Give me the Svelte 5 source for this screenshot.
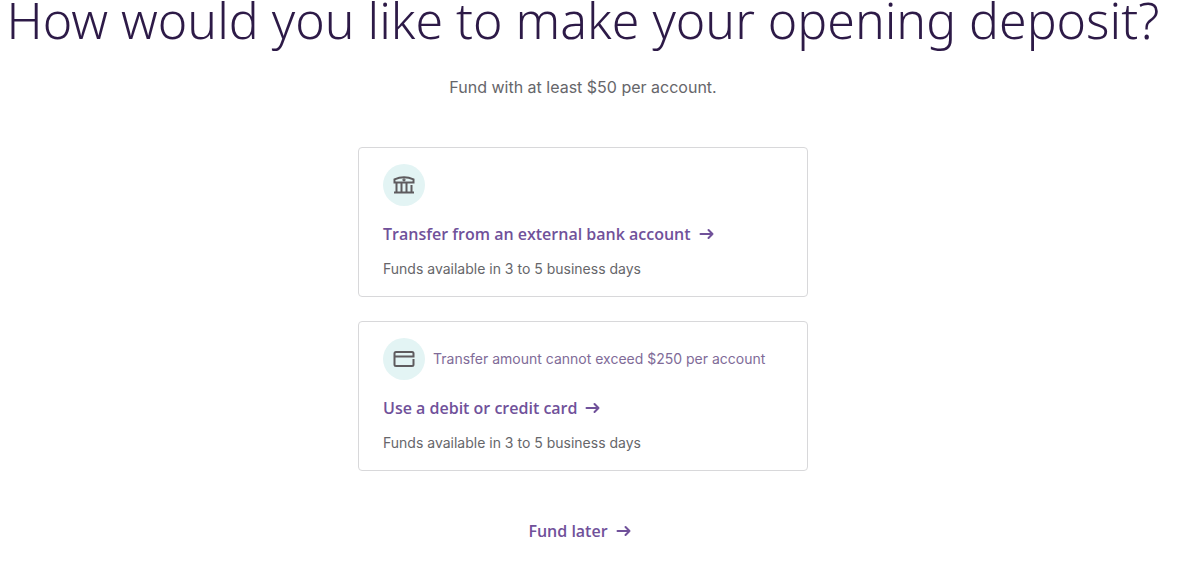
<script>
    const options = [
        {
            id: 'bank',
            title: 'Transfer from an external bank account',
            detail: 'Funds available in 3 to 5 business days',
            note: ''
        },
        {
            id: 'card',
            title: 'Use a debit or credit card',
            detail: 'Funds available in 3 to 5 business days',
            note: 'Transfer amount cannot exceed $250 per account'
        }
    ];
</script>

{#snippet arrow()}
    <svg class="arrow" viewBox="0 0 16 12" aria-hidden="true">
        <path d="M1.500 6h12M9.500 2L13.500 6l-4 4" />
    </svg>
{/snippet}

<main class="funding">
    <h1 class="funding__title">How would you like to make your opening deposit?</h1>
    <p class="funding__intro">Fund with at least $50 per account.</p>

    <div class="funding__options">
        {#each options as option (option.id)}
            <section class="option">
                <div class="option__top">
                    <span class="option__icon">
                        {#if option.id === 'bank'}
                            <svg viewBox="0 0 24 24" aria-hidden="true">
                                <path d="M2.500 9.500V6.300Q12 2 21.500 6.300V9.500Z" />
                                <path d="M4.500 10v9M9.500 10v9M14.500 10v9M19.500 12v7M2 19.500h20" />
                                <circle cx="12" cy="6.800" r="0.600" />
                            </svg>
                        {:else}
                            <svg viewBox="0 0 24 24" aria-hidden="true">
                                <path d="M21.500 12v5.500q0 1.500-1.500 1.500H4q-1.500 0-1.500-1.500V6.500Q2.500 5 4 5h16q1.500 0 1.500 1.500V9.500H2.500" />
                            </svg>
                        {/if}
                    </span>
                    {#if option.note}
                        <p class="option__note">{option.note}</p>
                    {/if}
                </div>
                <h2 class="option__title">
                    <a class="link" href="#{option.id}">{option.title}{@render arrow()}</a>
                </h2>
                <p class="option__detail">{option.detail}</p>
            </section>
        {/each}
    </div>

    <a class="link" href="#later">Fund later{@render arrow()}</a>
</main>

<style>
    :global(body) {
        margin: 0;
        background: #fff;
    }

    h1, h2, p {
        margin: 0;
    }

    .funding {
        display: flex;
        flex-direction: column;
        align-items: center;
        padding-right: 14px;
        color: #66666a;
        font-family: Inter, "Open Sans", sans-serif;
    }

    .funding__title {
        color: #2d1a47;
        font-family: "Noto Sans", "Open Sans", sans-serif;
        font-size: 50px;
        font-weight: 300;
        line-height: 40px;
        text-align: center;
    }

    .funding__intro {
        margin-top: 35px;
        font-size: 16px;
        line-height: 24px;
    }

    .funding__options {
        display: flex;
        flex-direction: column;
        gap: 24px;
        width: 100%;
        max-width: 450px;
        margin: 48px 0;
    }

    .option {
        padding: 16px 24px;
        border: 1px solid #d8d8da;
        border-radius: 4px;
    }

    .option__top {
        display: flex;
        align-items: center;
        gap: 8px;
    }

    .option__icon {
        display: flex;
        flex: none;
        align-items: center;
        justify-content: center;
        width: 42px;
        height: 42px;
        border-radius: 50%;
        background: #e3f4f4;
    }

    .option__icon svg {
        width: 24px;
        height: 24px;
        fill: none;
        stroke: #5e5b5e;
        stroke-width: 2;
    }

    .option__note {
        color: #806b98;
        font-size: 14px;
        line-height: 22px;
    }

    .option__title {
        margin: 16px 0 12px;
        font-size: 16px;
        line-height: 24px;
    }

    .option__detail {
        font-size: 14px;
        line-height: 22px;
    }

    .link {
        display: inline-flex;
        align-items: center;
        gap: 8px;
        color: #70519a;
        font-family: "Open Sans", sans-serif;
        font-size: 16px;
        font-weight: 600;
        line-height: 24px;
        text-decoration: none;
    }

    .arrow {
        width: 16px;
        height: 12px;
        margin-right: 6px;
        fill: none;
        stroke: currentColor;
        stroke-width: 2;
        stroke-linecap: round;
        stroke-linejoin: round;
    }
</style>
